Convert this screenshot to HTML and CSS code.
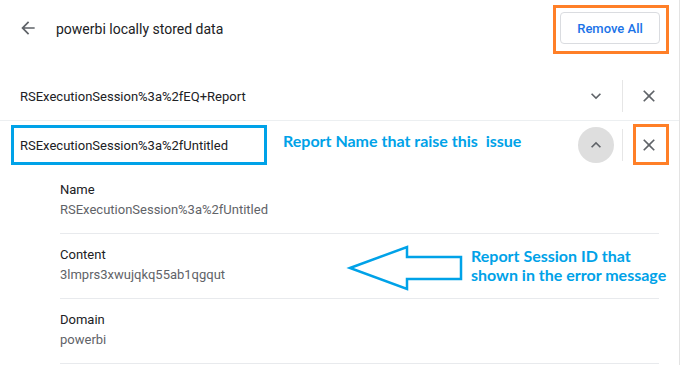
FILE: index.html
```html
<!DOCTYPE html>
<html lang="en">
<head>
<meta charset="utf-8">
<title>powerbi locally stored data</title>
<link rel="stylesheet" href="styles.css">
</head>
<body>
<div class="page">
  <header class="head">
    <button class="back" aria-label="Back">
      <svg viewBox="0 0 24 24" width="20" height="20"><path d="M20 11H7.83l5.59-5.59L12 4l-8 8 8 8 1.41-1.41L7.83 13H20v-2z" fill="#5f6368"/></svg>
    </button>
    <h1 class="title">powerbi locally stored data</h1>
    <button class="remove">Remove All</button>
  </header>

  <div class="list">
    <div class="row">
      <span class="name">RSExecutionSession%3a%2fEQ+Report</span>
      <button class="icon-btn" aria-label="Expand">
        <svg viewBox="0 0 24 24" width="20" height="20"><path d="M16.59 8.59L12 13.17 7.41 8.59 6 10l6 6 6-6z" fill="#5f6368"/></svg>
      </button>
      <span class="sep"></span>
      <button class="icon-btn" aria-label="Remove">
        <svg viewBox="0 0 24 24" width="20" height="20"><path d="M19 6.41L17.59 5 12 10.59 6.41 5 5 6.41 10.59 12 5 17.59 6.41 19 12 13.41 17.59 19 19 17.59 13.41 12z" fill="#5f6368"/></svg>
      </button>
    </div>

    <div class="row open">
      <span class="name">RSExecutionSession%3a%2fUntitled</span>
      <button class="icon-btn active" aria-label="Collapse">
        <svg viewBox="0 0 24 24" width="20" height="20"><path d="M12 8l-6 6 1.41 1.41L12 10.83l4.59 4.58L18 14z" fill="#5f6368"/></svg>
      </button>
      <span class="sep"></span>
      <button class="icon-btn" aria-label="Remove">
        <svg viewBox="0 0 24 24" width="20" height="20"><path d="M19 6.41L17.59 5 12 10.59 6.41 5 5 6.41 10.59 12 5 17.59 6.41 19 12 13.41 17.59 19 19 17.59 13.41 12z" fill="#5f6368"/></svg>
      </button>
    </div>

    <div class="details">
      <div class="item">
        <div class="label">Name</div>
        <div class="value">RSExecutionSession%3a%2fUntitled</div>
      </div>
      <div class="item">
        <div class="label">Content</div>
        <div class="value">3lmprs3xwujqkq55ab1qgqut</div>
      </div>
      <div class="item">
        <div class="label">Domain</div>
        <div class="value">powerbi</div>
      </div>
    </div>
  </div>

  <div class="mark orange mark-remove"></div>
  <div class="mark blue mark-name"></div>
  <div class="mark orange mark-close"></div>
  <div class="note note-name">Report Name that raise this&nbsp; issue</div>
  <svg class="arrow" width="120" height="50" viewBox="345 242 120 50">
    <polygon points="350,268 407,247 407,257 461,257 461,279 407,279 407,289" fill="none" stroke="#00a2e8" stroke-width="2.5" stroke-linejoin="miter"/>
  </svg>
  <div class="note note-session">Report Session ID that<br>shown in the error message</div>
</div>
</body>
</html>
```

FILE: styles.css
```css
* { box-sizing: border-box; }
html, body { margin: 0; padding: 0; background: #fff; }
body {
  font-family: Roboto, "Noto Sans", Arial, sans-serif;
  color: #202124;
  overflow: hidden;
}
.page {
  position: relative;
  width: 680px;
  height: 365px;
  border-right: 1px solid #e3e3e3;
  overflow: hidden;
}
button {
  font-family: inherit;
  background: none;
  border: 0;
  padding: 0;
  margin: 0;
  cursor: pointer;
}
.head {
  display: flex;
  align-items: center;
  height: 56px;
  padding: 0 19px 0 18px;
}
.back {
  width: 20px;
  height: 20px;
  display: flex;
}
.title {
  flex: 1;
  margin: 0 0 0 18px;
  font-size: 14px;
  font-weight: 400;
  color: #202124;
  padding-top: 1px;
}
.remove {
  width: 100px;
  height: 32px;
  border: 1px solid #dadce0;
  border-radius: 4px;
  color: #1a73e8;
  font-size: 13px;
  font-weight: 500;
}
.list { margin-top: 16px; }
.row {
  display: flex;
  align-items: center;
  height: 48px;
  padding: 0 12px 0 20px;
}
.row:first-child { border-bottom: 1px solid #eceff1; height: 49px; }
.name {
  flex: 1;
  font-size: 13px;
  color: #202124;
}
.icon-btn {
  width: 36px;
  height: 36px;
  border-radius: 50%;
  display: flex;
  align-items: center;
  justify-content: center;
}
.icon-btn.active { background: #dedede; }
.sep {
  width: 1px;
  height: 32px;
  background: #e6e6e6;
  margin: 0 8px;
}
.details { padding: 0 20px 0 60px; }
.item {
  padding: 11px 0 13px;
  border-bottom: 1px solid #e8eaed;
}
.label { font-size: 13px; line-height: 20px; color: #202124; }
.value { font-size: 13px; line-height: 20px; color: #5f6368; }

.mark { position: absolute; border: 3px solid; }
.orange { border-color: #ff7f27; }
.blue { border-color: #00a2e8; }
.mark-remove { left: 553px; top: 5px; width: 116px; height: 49px; }
.mark-name { left: 11px; top: 125px; width: 256px; height: 40px; }
.mark-close { left: 633px; top: 124px; width: 36px; height: 41px; }

.note {
  position: absolute;
  font-family: Lato, "Open Sans", sans-serif;
  font-weight: 700;
  font-size: 16px;
  line-height: 19px;
  color: #00a2e8;
  white-space: nowrap;
}
.note-name { left: 283px; top: 131px; }
.note-session { left: 471px; top: 246px; }
.arrow { position: absolute; left: 345px; top: 242px; }
```
